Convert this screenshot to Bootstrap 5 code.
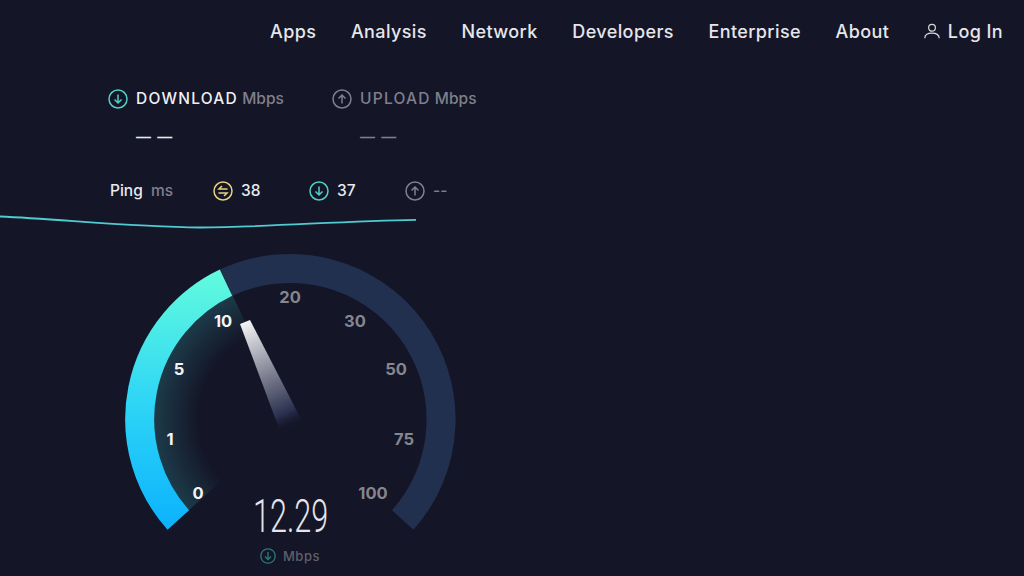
<!DOCTYPE html>
<html lang="en">

<head>
  <meta charset="UTF-8">
  <meta name="viewport" content="width=device-width, initial-scale=1.0">
  <title>Speedtest</title>
  <link href="https://cdn.jsdelivr.net/npm/bootstrap@5.3.0/dist/css/bootstrap.min.css" rel="stylesheet">
  <style>
    html, body {
      height: 576px;
      overflow: hidden;
    }

    body {
      background: #141526;
      color: #e9e9ee;
      font-family: Inter, "Liberation Sans", sans-serif;
      font-weight: 500;
    }

    .top-nav {
      height: 62px;
      padding-right: 21px;
      gap: 34.6px;
    }

    .top-nav a {
      color: #e6e6eb;
      font-size: 18px;
      letter-spacing: .4px;
      text-decoration: none;
    }

    .stat-head {
      margin-left: 108px;
      padding-top: 27px;
    }

    .stat-col {
      width: 224px;
    }

    .stat-title {
      font-size: 15.5px;
      line-height: 20px;
      color: #f0f0f4;
    }

    .stat-caps {
      letter-spacing: 1.25px;
    }

    .stat-dim {
      color: #7f808d;
    }

    .stat-dash {
      font-size: 15px;
      font-weight: 700;
      line-height: 20px;
      margin: 18px 0 0 28px;
      letter-spacing: 1px;
      font-family: "Liberation Sans", sans-serif;
    }

    .ping-row {
      margin: 34px 0 0 110px;
      height: 20px;
      font-size: 15.5px;
      line-height: 20px;
    }

    .ping-label {
      width: 103px;
    }

    .ping-item {
      width: 96px;
    }

    .trace-line {
      display: block;
      margin-top: 10px;
    }

    .gauge-box {
      display: block;
      margin: 10px 0 0 110px;
    }

    .tick {
      font-size: 16.5px;
      font-weight: 700;
      text-anchor: middle;
      fill: #85868f;
    }

    .tick-on {
      fill: #f4f4f6;
    }

    .speed-val {
      font-family: Roboto, sans-serif;
      font-size: 46px;
      font-weight: 300;
      fill: #e4e4ea;
    }

    .speed-unit {
      font-size: 13px;
      letter-spacing: .5px;
      fill: #5f606c;
    }
  </style>
</head>

<body>
  <nav class="top-nav d-flex justify-content-end align-items-center">
    <a href="#">Apps</a>
    <a href="#">Analysis</a>
    <a href="#">Network</a>
    <a href="#">Developers</a>
    <a href="#">Enterprise</a>
    <a href="#">About</a>
    <a href="#" class="d-flex align-items-center gap-2">
      <svg width="16" height="16" viewBox="0 0 16 16" fill="none" stroke="#d8d8de" stroke-width="1.2">
        <circle cx="8" cy="4.8" r="3.4" />
        <path d="M.8 15.2c0-3.4 3-5 7.2-5s7.2 1.600 7.200 5" />
      </svg>
      Log In
    </a>
  </nav>

  <!-- Download / upload -->
  <div class="stat-head d-flex">
    <div class="stat-col">
      <div class="stat-title d-flex align-items-center gap-2">
        <svg width="20" height="20" viewBox="0 0 20 20" fill="none" stroke="#52cfc6" stroke-width="1.500">
          <circle cx="10" cy="10" r="9" />
          <path d="M10 5.500v8.500M6.500 10.500l3.500 3.500 3.500-3.500" />
        </svg>
        <span><span class="stat-caps">DOWNLOAD</span> <span class="stat-dim">Mbps</span></span>
      </div>
      <div class="stat-dash">— —</div>
    </div>
    <div class="stat-col">
      <div class="stat-title stat-dim d-flex align-items-center gap-2">
        <svg width="20" height="20" viewBox="0 0 20 20" fill="none" stroke="#7f808d" stroke-width="1.500">
          <circle cx="10" cy="10" r="9" />
          <path d="M10 14.500v-8.500M6.500 9.500l3.500-3.500 3.500 3.500" />
        </svg>
        <span><span class="stat-caps">UPLOAD</span> Mbps</span>
      </div>
      <div class="stat-dash stat-dim">— —</div>
    </div>
  </div>

  <!-- Ping -->
  <div class="ping-row d-flex align-items-center">
    <div class="ping-label">Ping <span class="stat-dim ms-1">ms</span></div>
    <div class="ping-item d-flex align-items-center gap-2">
      <svg width="20" height="20" viewBox="0 0 20 20" fill="none" stroke="#e6d27e" stroke-width="1.500">
        <circle cx="10" cy="10" r="9" />
        <path d="M14.500 8H6l3-3M5.500 12H14l-3 3" />
      </svg>
      <span>38</span>
    </div>
    <div class="ping-item d-flex align-items-center gap-2">
      <svg width="20" height="20" viewBox="0 0 20 20" fill="none" stroke="#52cfc6" stroke-width="1.500">
        <circle cx="10" cy="10" r="9" />
        <path d="M10 5.500v8.500M6.500 10.500l3.500 3.500 3.500-3.500" />
      </svg>
      <span>37</span>
    </div>
    <div class="ping-item d-flex align-items-center gap-2 stat-dim">
      <svg width="20" height="20" viewBox="0 0 20 20" fill="none" stroke="#7f808d" stroke-width="1.500">
        <circle cx="10" cy="10" r="9" />
        <path d="M10 14.500v-8.500M6.500 9.500l3.500-3.500 3.500 3.500" />
      </svg>
      <span>--</span>
    </div>
  </div>

  <svg class="trace-line" width="416" height="20" viewBox="0 210 416 20" fill="none">
    <path d="M0 215.500C60 218 130 226 200 226.500C270 226 340 220 416 218.800" stroke="#4fcbd2" stroke-width="1.800" />
  </svg>

  <!-- Gauge: viewBox uses page coordinates -->
  <svg class="gauge-box" width="360" height="336" viewBox="110 240 360 336">
    <defs>
      <linearGradient id="arcFill" gradientUnits="userSpaceOnUse" x1="0" y1="528" x2="0" y2="270">
        <stop offset="0" stop-color="#0bb2fd" />
        <stop offset=".5" stop-color="#2fd6f5" />
        <stop offset="1" stop-color="#62fbdd" />
      </linearGradient>
      <radialGradient id="arcGlow" gradientUnits="userSpaceOnUse" cx="290.500" cy="418" r="138">
        <stop offset=".66" stop-color="#3fd8e0" stop-opacity="0" />
        <stop offset="1" stop-color="#3fd8e0" stop-opacity=".2" />
      </radialGradient>
      <linearGradient id="needleFill" gradientUnits="userSpaceOnUse" x1="245" y1="321" x2="292" y2="428">
        <stop offset="0" stop-color="#f4f4f6" />
        <stop offset=".5" stop-color="#7d7f90" />
        <stop offset=".85" stop-color="#2a3050" />
        <stop offset="1" stop-color="#141526" stop-opacity="0" />
      </linearGradient>
    </defs>

    <path d="M402.700 519A151 151 0 0 0 226 281.700" fill="none" stroke="#22304f" stroke-width="29" />
    <path d="M290.500 418L188 510A138 138 0 0 1 232 293Z" fill="url(#arcGlow)" />
    <path d="M178.300 519A151 151 0 0 1 226 281.700" fill="none" stroke="url(#arcFill)" stroke-width="29" />
    <polygon points="240,323 250,319 303,422 280,430" fill="url(#needleFill)" />

    <text class="tick tick-on" x="198" y="497.500">0</text>
    <text class="tick tick-on" x="170" y="443.500">1</text>
    <text class="tick tick-on" x="179" y="373.500">5</text>
    <text class="tick tick-on" x="223" y="325.500">10</text>
    <text class="tick" x="290" y="301.500">20</text>
    <text class="tick" x="355" y="325.500">30</text>
    <text class="tick" x="396" y="373.500">50</text>
    <text class="tick" x="404" y="443.500">75</text>
    <text class="tick" x="373" y="497.500">100</text>

    <text class="speed-val" transform="translate(253 530.500) scale(.665 1)">12.29</text>

    <g fill="none" stroke="#2a7a78" stroke-width="1.300">
      <circle cx="268" cy="555" r="7.200" />
      <path d="M268 551v7.500M265 555.500l3 3 3-3" />
    </g>
    <text class="speed-unit" x="283" y="559.500">Mbps</text>
  </svg>

  <script src="https://cdn.jsdelivr.net/npm/bootstrap@5.3.0/dist/js/bootstrap.bundle.min.js"></script>
</body>

</html>
